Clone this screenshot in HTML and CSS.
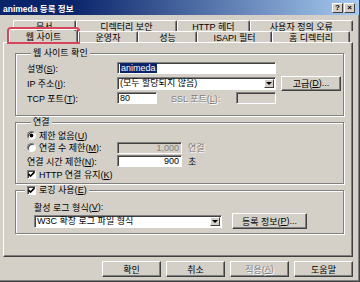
FILE: index.html
```html
<!DOCTYPE html>
<html lang="ko">
<head>
    <meta charset="UTF-8" />
    <meta name="viewport" content="width=device-width, initial-scale=1.0" />
    <title>animeda 등록 정보</title>
    <link rel="stylesheet" href="styles.css">
</head>
<body>
    <div class="window">
        <div class="titlebar">
            <span>animeda 등록 정보</span>
            <div class="tb-buttons">
                <span class="tb-btn">?</span>
                <span class="tb-btn">×</span>
            </div>
        </div>

        <div class="inner">
            <div class="tabs">
                <div class="tab-row back">
                    <span class="tab t-doc">문서</span>
                    <span class="tab t-sec">디렉터리 보안</span>
                    <span class="tab t-http">HTTP 헤더</span>
                    <span class="tab t-err">사용자 정의 오류</span>
                </div>
                <div class="tab-row front">
                    <span class="tab active">웹 사이트</span>
                    <span class="tab t-op">운영자</span>
                    <span class="tab t-perf">성능</span>
                    <span class="tab t-isapi">ISAPI 필터</span>
                    <span class="tab t-home">홈 디렉터리</span>
                </div>
            </div>

            <div class="panel">
                <fieldset class="group g-site">
                    <legend>웹 사이트 확인</legend>
                    <div class="row">
                        <span class="lbl">설명(<u>S</u>):</span>
                        <div class="field w-wide"><span class="sel">animeda</span></div>
                    </div>
                    <div class="row">
                        <span class="lbl">IP 주소(<u>I</u>):</span>
                        <div class="field combo w-wide">
                            <span class="combo-text">(모두 할당되지 않음)</span>
                            <span class="drop"></span>
                        </div>
                        <span class="btn b-adv">고급(<u>D</u>)...</span>
                    </div>
                    <div class="row">
                        <span class="lbl">TCP 포트(<u>T</u>):</span>
                        <div class="field w-port">80</div>
                        <span class="disabled ssl-lbl">SSL 포트(<u>L</u>):</span>
                        <div class="field off w-port"></div>
                    </div>
                </fieldset>

                <fieldset class="group g-conn">
                    <legend>연결</legend>
                    <div class="row r1">
                        <span class="radio on"></span>
                        <span class="opt">제한 없음(<u>U</u>)</span>
                    </div>
                    <div class="row r2">
                        <span class="radio"></span>
                        <span class="opt opt-lbl">연결 수 제한(<u>M</u>):</span>
                        <div class="field off w-num num">1,000</div>
                        <span class="disabled unit">연결</span>
                    </div>
                    <div class="row r3">
                        <span class="lbl">연결 시간 제한(<u>N</u>):</span>
                        <div class="field w-num num">900</div>
                        <span class="unit">초</span>
                    </div>
                    <div class="row r4">
                        <span class="check"><svg width="7" height="7" viewBox="0 0 7 7"><path d="M0.5 3 L2.5 5 L6.5 1" fill="none" stroke="#000" stroke-width="1.6"/></svg></span>
                        <span class="opt">HTTP 연결 유지(<u>K</u>)</span>
                    </div>
                </fieldset>

                <fieldset class="group g-log">
                    <legend><span class="check"><svg width="7" height="7" viewBox="0 0 7 7"><path d="M0.5 3 L2.5 5 L6.5 1" fill="none" stroke="#000" stroke-width="1.6"/></svg></span><span class="opt">로깅 사용(<u>E</u>)</span></legend>
                    <div class="log-body">
                        <div class="row r-fmt">활성 로그 형식(<u>V</u>):</div>
                        <div class="row r-log">
                            <div class="field combo w-log">
                                <span class="combo-text">W3C 확장 로그 파일 형식</span>
                                <span class="drop"></span>
                            </div>
                            <span class="btn b-prop">등록 정보(<u>P</u>)...</span>
                        </div>
                    </div>
                </fieldset>
            </div>

            <div class="buttons">
                <span class="btn">확인</span>
                <span class="btn">취소</span>
                <span class="btn disabled">적용(<u>A</u>)</span>
                <span class="btn">도움말</span>
            </div>
        </div>
    </div>
</body>
</html>
```
FILE: styles.css
```css
:root {
    --face: #d4d0c8;
    --shadow: #808080;
    --dark: #404040;
    --light: #ffffff;
    --navy: #0a246a;
}

* {
    box-sizing: border-box;
}

body {
    margin: 0;
    font-family: 'Liberation Sans', 'Noto Sans CJK KR', sans-serif;
    font-size: 9px;
    color: #000;
    background: var(--face);
}

u {
    text-decoration: underline;
}

.window {
    width: 360px;
    height: 282px;
    background: var(--face);
    border-right: 1px solid var(--dark);
    border-bottom: 1px solid var(--dark);
    box-shadow: inset -1px -1px 0 var(--shadow);
    display: flex;
    flex-direction: column;
}

.titlebar {
    height: 15px;
    padding: 0 4px 0 3px;
    background: linear-gradient(to right, var(--navy) 20%, #a6caf0);
    color: white;
    font-size: 8.5px;
    font-weight: bold;
    display: flex;
    align-items: center;
    justify-content: space-between;
}

.tb-buttons {
    display: flex;
}

.tb-btn {
    width: 11px;
    height: 10px;
    background: var(--face);
    color: #000;
    border: 1px solid;
    border-color: var(--light) var(--dark) var(--dark) var(--light);
    font-size: 8px;
    line-height: 8px;
    text-align: center;
}

.tb-btn + .tb-btn {
    margin-left: 1px;
}

.inner {
    padding: 5px 6px 0 3px;
}

/* tabs */
.tab-row {
    display: flex;
    height: 11px;
    align-items: flex-end;
}

.tab-row.back {
    padding-left: 10px;
}

.tab-row.front {
    padding-left: 6px;
}

.tab {
    height: 11px;
    display: flex;
    align-items: center;
    justify-content: center;
    border-top: 1px solid var(--light);
    border-left: 1px solid var(--light);
    border-right: 1px solid var(--dark);
    box-shadow: inset -1px 0 0 var(--shadow);
    border-radius: 2px 2px 0 0;
    white-space: nowrap;
}

.t-doc { width: 63px; }
.t-sec { width: 102px; }
.t-http { width: 73px; }
.t-err { width: 104px; }

.tab.active {
    width: 69px;
    height: 13px;
    outline: 2px solid #d8455a;
    outline-offset: 0;
}

.t-op { width: 60px; }
.t-perf { width: 59px; }
.t-isapi { width: 75px; }
.t-home { width: 78px; }

/* property page */
.panel {
    height: 215px;
    padding: 5px 7px 0 11px;
    border: 1px solid;
    border-color: var(--light) var(--dark) var(--dark) var(--light);
    box-shadow: inset -1px -1px 0 var(--shadow);
}

.group {
    margin: 0;
    width: 329px;
    border: 1px solid var(--shadow);
    box-shadow: inset 1px 1px 0 var(--light), 1px 1px 0 var(--light);
}

.group legend {
    margin-left: 4px;
    padding: 0 2px;
    line-height: 11px;
    background: var(--face);
}

.group + .group {
    margin-top: 1px;
}

.row {
    display: flex;
    align-items: center;
    white-space: nowrap;
}

.g-site {
    padding: 2px 0 10px 11px;
}

.g-site .row {
    height: 14px;
}

.g-site .row + .row {
    margin-top: 1px;
}

.lbl {
    width: 90px;
}

.field {
    height: 12px;
    background: white;
    border: 1px solid;
    border-color: var(--shadow) var(--light) var(--light) var(--shadow);
    box-shadow: inset 1px 1px 0 var(--dark);
    padding: 0 2px;
    line-height: 10px;
    overflow: hidden;
    white-space: nowrap;
}

.field.off {
    background: var(--face);
    color: var(--shadow);
}

.w-wide { width: 159px; }
.w-port { width: 40px; }
.w-num { width: 65px; }
.w-log { width: 188px; }

.num {
    text-align: right;
}

.sel {
    background: var(--navy);
    color: white;
    padding: 0 1px;
}

.combo {
    height: 13px;
    display: flex;
    align-items: center;
    padding-right: 1px;
}

.combo-text {
    flex: 1;
}

.drop {
    width: 10px;
    height: 9px;
    background: var(--face);
    border: 1px solid;
    border-color: var(--light) var(--dark) var(--dark) var(--light);
    display: flex;
    align-items: center;
    justify-content: center;
}

.drop::after {
    content: "";
    border-left: 3px solid transparent;
    border-right: 3px solid transparent;
    border-top: 3px solid #000;
}

.btn {
    height: 15px;
    background: var(--face);
    border: 1px solid;
    border-color: var(--light) var(--dark) var(--dark) var(--light);
    box-shadow: inset -1px -1px 0 var(--shadow);
    display: flex;
    align-items: center;
    justify-content: center;
    white-space: nowrap;
}

.b-adv {
    width: 60px;
    margin-left: 5px;
}

.disabled {
    color: var(--shadow);
    text-shadow: 1px 1px 0 var(--light);
}

.ssl-lbl {
    width: 65px;
    margin-left: 14px;
}

/* connection group */
.g-conn {
    padding: 1px 0 2px 11px;
}

.g-conn .r1 { height: 12px; }
.g-conn .r2 { height: 13px; }
.g-conn .r3 { height: 14px; }
.g-conn .r4 { height: 13px; }

.radio {
    width: 9px;
    height: 9px;
    border-radius: 50%;
    border: 1px solid;
    border-color: var(--shadow) var(--light) var(--light) var(--shadow);
    background: white;
    box-shadow: inset 1px 1px 0 var(--dark);
}

.radio.on {
    background: radial-gradient(circle, #000 1.6px, white 2.2px);
}

.check {
    width: 9px;
    height: 9px;
    background: white;
    border: 1px solid;
    border-color: var(--shadow) var(--light) var(--light) var(--shadow);
    box-shadow: inset 1px 1px 0 var(--dark);
    display: inline-flex;
    align-items: center;
    justify-content: center;
    vertical-align: middle;
}

.opt {
    margin-left: 3px;
}

.opt-lbl {
    width: 78px;
}

.unit {
    margin-left: 6px;
}

/* logging group */
.g-log {
    padding: 5px 0 4px 0;
}

.g-log legend {
    margin-left: 9px;
    padding: 0 2px;
    white-space: nowrap;
}

.g-log legend .opt {
    vertical-align: middle;
}

.log-body {
    padding-left: 18px;
}

.r-fmt {
    height: 12px;
}

.r-log {
    height: 16px;
}

.b-prop {
    width: 75px;
    height: 16px;
    margin-left: 10px;
}

.buttons {
    margin-top: 4px;
    display: flex;
    justify-content: flex-end;
    gap: 5px;
}

.buttons .btn {
    width: 59px;
    height: 16px;
}
```
